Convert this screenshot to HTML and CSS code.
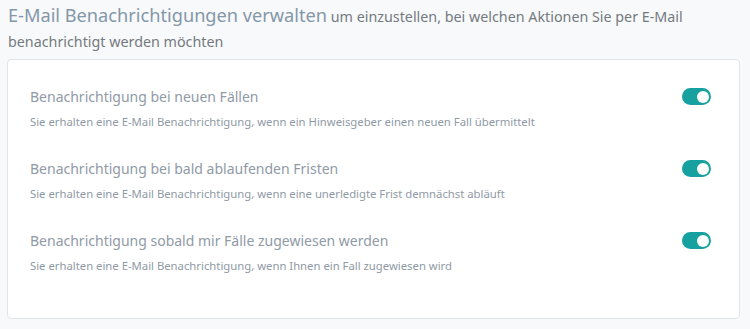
FILE: index.html
```html
<!DOCTYPE html>
<html lang="de">
<head>
  <meta charset="UTF-8">
  <meta name="viewport" content="width=device-width, initial-scale=1.0">
  <title>E-Mail Benachrichtigungen</title>
  <link rel="stylesheet" href="styles.css">
</head>
<body>
  <div class="page">
    <p class="intro">
      <span class="intro-title">E-Mail Benachrichtigungen verwalten</span>
      um einzustellen, bei welchen Aktionen Sie per E-Mail benachrichtigt werden möchten
    </p>

    <div class="card">
      <div class="setting">
        <div class="setting-text">
          <h4>Benachrichtigung bei neuen Fällen</h4>
          <p>Sie erhalten eine E-Mail Benachrichtigung, wenn ein Hinweisgeber einen neuen Fall übermittelt</p>
        </div>
        <label class="switch">
          <input type="checkbox" checked>
          <span class="slider"></span>
        </label>
      </div>

      <div class="setting">
        <div class="setting-text">
          <h4>Benachrichtigung bei bald ablaufenden Fristen</h4>
          <p>Sie erhalten eine E-Mail Benachrichtigung, wenn eine unerledigte Frist demnächst abläuft</p>
        </div>
        <label class="switch">
          <input type="checkbox" checked>
          <span class="slider"></span>
        </label>
      </div>

      <div class="setting">
        <div class="setting-text">
          <h4>Benachrichtigung sobald mir Fälle zugewiesen werden</h4>
          <p>Sie erhalten eine E-Mail Benachrichtigung, wenn Ihnen ein Fall zugewiesen wird</p>
        </div>
        <label class="switch">
          <input type="checkbox" checked>
          <span class="slider"></span>
        </label>
      </div>
    </div>
  </div>
</body>
</html>
```

FILE: styles.css
```css
:root {
  --bg: #f8f9fb;
  --card-bg: #ffffff;
  --border: #e1e4e8;
  --heading: #8497a8;
  --text: #74797f;
  --muted: #8f9aa6;
  --teal: #17a0a0;
}

* {
  box-sizing: border-box;
  margin: 0;
  padding: 0;
}

body {
  font-family: 'Noto Sans', 'Open Sans', sans-serif;
  background-color: var(--bg);
  color: var(--text);
}

.page {
  padding: 3px 10px 0 7px;
}

.intro {
  padding-left: 1px;
  font-size: 14.3px;
  line-height: 25px;
}

.intro-title {
  font-size: 18.2px;
  line-height: 25px;
  color: var(--heading);
}

.card {
  margin-top: 5px;
  background-color: var(--card-bg);
  border: 1px solid var(--border);
  border-radius: 4px;
  padding: 27px 28px 15px 22px;
  min-height: 259px;
}

.setting {
  display: flex;
  align-items: flex-start;
  justify-content: space-between;
  margin-bottom: 29px;
}

.setting h4 {
  font-weight: 400;
  font-size: 14px;
  line-height: 20px;
  color: var(--muted);
  margin-bottom: 7px;
}

.setting p {
  font-size: 11.3px;
  line-height: 16px;
  color: var(--muted);
}

.switch {
  position: relative;
  display: inline-block;
  width: 29px;
  height: 17px;
  margin-top: 1px;
}

.switch input {
  display: none;
}

.slider {
  position: absolute;
  inset: 0;
  background-color: #ccd;
  border-radius: 9px;
  cursor: pointer;
}

.slider::before {
  content: '';
  position: absolute;
  width: 12px;
  height: 12px;
  top: 2.5px;
  left: 2.5px;
  background: #fff;
  border-radius: 50%;
  transition: transform 0.2s ease;
}

.switch input:checked + .slider {
  background-color: var(--teal);
}

.switch input:checked + .slider::before {
  transform: translateX(12px);
}
```
